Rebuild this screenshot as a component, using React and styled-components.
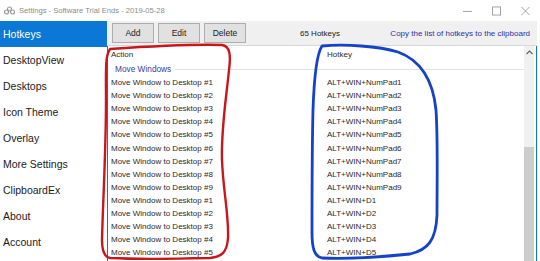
import React from "react";
import styled, { createGlobalStyle } from "styled-components";

const GlobalStyle = createGlobalStyle`
  html, body {
    margin: 0;
    padding: 0;
    background: #ffffff;
  }
  body {
    font-family: "Liberation Sans", Arial, sans-serif;
  }
`;

const menuItems = [
  "Hotkeys",
  "DesktopView",
  "Desktops",
  "Icon Theme",
  "Overlay",
  "More Settings",
  "ClipboardEx",
  "About",
  "Account",
];

const rows = [
  ...[1, 2, 3, 4, 5, 6, 7, 8, 9].map((n) => [
    `Move Window to Desktop #${n}`,
    `ALT+WIN+NumPad${n}`,
  ]),
  ...[1, 2, 3, 4, 5].map((n) => [`Move Window to Desktop #${n}`, `ALT+WIN+D${n}`]),
];

const App = () => {
  return (
    <>
      <GlobalStyle />
      <Window>
        <TitleBar>
          <TitleIcon width="11" height="10" viewBox="0 0 11 10">
            <circle cx="2.5" cy="6" r="2" fill="none" stroke="#9a9a9a" strokeWidth="1.2" />
            <circle cx="5.5" cy="3" r="2" fill="none" stroke="#9a9a9a" strokeWidth="1.2" />
            <circle cx="8.5" cy="6" r="2" fill="none" stroke="#9a9a9a" strokeWidth="1.2" />
          </TitleIcon>
          <TitleText>Settings - Software Trial Ends - 2019-05-28</TitleText>
          <WindowControls>
            <ControlBox>
              <svg width="10" height="10" viewBox="0 0 10 10">
                <line x1="0" y1="5.5" x2="10" y2="5.5" stroke="#9a9a9a" strokeWidth="1" />
              </svg>
            </ControlBox>
            <ControlBox>
              <svg width="10" height="10" viewBox="0 0 10 10">
                <rect x="0.5" y="0.5" width="9" height="9" fill="none" stroke="#9a9a9a" strokeWidth="1" />
              </svg>
            </ControlBox>
            <ControlBox>
              <svg width="10" height="10" viewBox="0 0 10 10">
                <line x1="0.5" y1="0.5" x2="9.5" y2="9.5" stroke="#9a9a9a" strokeWidth="1" />
                <line x1="9.5" y1="0.5" x2="0.5" y2="9.5" stroke="#9a9a9a" strokeWidth="1" />
              </svg>
            </ControlBox>
          </WindowControls>
        </TitleBar>

        <Body>
          <Sidebar>
            {menuItems.map((item, i) => (
              <MenuItem key={item} active={i === 0}>
                {item}
              </MenuItem>
            ))}
          </Sidebar>

          <Main>
            <Toolbar>
              <ToolButton>Add</ToolButton>
              <ToolButton>Edit</ToolButton>
              <ToolButton>Delete</ToolButton>
              <Count>65 Hotkeys</Count>
              <CopyLink>Copy the list of hotkeys to the clipboard</CopyLink>
            </Toolbar>

            <ListPanel>
              <ListContent>
                <HeaderRow>
                  <span>Action</span>
                  <span>Hotkey</span>
                </HeaderRow>
                <GroupRow>
                  <GroupLabel>Move Windows</GroupLabel>
                  <GroupLine />
                </GroupRow>
                {rows.map(([action, key], i) => (
                  <Row key={i}>
                    <span>{action}</span>
                    <span>{key}</span>
                  </Row>
                ))}
              </ListContent>
              <Scrollbar>
                <ScrollArrow>
                  <svg width="7" height="5" viewBox="0 0 7 5">
                    <polyline points="0.5,4 3.5,1 6.5,4" fill="none" stroke="#606060" strokeWidth="1.1" />
                  </svg>
                </ScrollArrow>
                <ScrollTrack>
                  <ScrollThumb />
                </ScrollTrack>
              </Scrollbar>
            </ListPanel>
          </Main>
        </Body>

        <Annotations width="540" height="261" viewBox="0 0 540 261">
          <path
            d="M110 49 C140 47 190 44 222 45 C230 46 231 55 229 70 C226 100 221 130 222 160 C223 190 229 215 228 238 C227 252 222 257 210 258 C170 259 130 259 110 258 C104 257 102 250 102 240 C103 200 106 150 106 100 C106 70 105 56 110 49 Z"
            fill="none"
            stroke="#c9161d"
            strokeWidth="2.4"
            strokeLinejoin="round"
          />
          <path
            d="M322 46 C345 44 378 46 398 52 C420 60 433 80 436 110 C438 140 437 180 437 215 C436 240 428 250 410 254 C380 257 345 259 322 258 C314 256 312 248 312 232 C312 190 312 150 313 110 C314 80 316 55 322 46 Z"
            fill="none"
            stroke="#1442c8"
            strokeWidth="2.8"
            strokeLinejoin="round"
          />
        </Annotations>
      </Window>
    </>
  );
};

const Window = styled.div`
  position: relative;
  width: 540px;
  height: 261px;
  overflow: hidden;
  display: flex;
  flex-direction: column;
  background: #ffffff;
`;

const TitleBar = styled.div`
  height: 21px;
  flex: 0 0 21px;
  display: flex;
  align-items: center;
  padding-left: 4px;
`;

const TitleIcon = styled.svg`
  margin-right: 4px;
`;

const TitleText = styled.span`
  font-size: 7.6px;
  color: #8c8c8c;
  flex: 1;
`;

const WindowControls = styled.div`
  display: flex;
  align-items: center;
  gap: 20px;
  padding-right: 10px;
`;

const ControlBox = styled.div`
  width: 9px;
  height: 10px;
  display: flex;
`;

const Body = styled.div`
  flex: 1;
  display: flex;
  min-height: 0;
  padding-right: 3px;
`;

const Sidebar = styled.nav`
  width: 107px;
  flex: 0 0 107px;
  display: flex;
  flex-direction: column;
`;

const MenuItem = styled.div`
  height: 26px;
  flex: 0 0 26px;
  display: flex;
  align-items: center;
  padding-left: 3px;
  font-size: 10.5px;
  color: ${(props) => (props.active ? "#ffffff" : "#1a1a1a")};
  background: ${(props) => (props.active ? "#0a78d4" : "transparent")};
`;

const Main = styled.div`
  flex: 1;
  display: flex;
  flex-direction: column;
  min-width: 0;
`;

const Toolbar = styled.div`
  height: 25px;
  flex: 0 0 25px;
  display: flex;
  align-items: center;
  background: #f0f0f0;
  border-bottom: 1px solid #d8d8d8;
  padding-left: 5px;
  box-sizing: border-box;
`;

const ToolButton = styled.div`
  width: 42px;
  height: 20px;
  box-sizing: border-box;
  margin-right: 4px;
  display: flex;
  align-items: center;
  justify-content: center;
  background: #e1e1e1;
  border: 1px solid #adadad;
  font-size: 8.5px;
  color: #1a1a1a;
`;

const Count = styled.span`
  margin-left: 50px;
  font-size: 8px;
  color: #1a1a1a;
`;

const CopyLink = styled.span`
  margin-left: auto;
  margin-right: 7px;
  font-size: 8px;
  color: #2f2fa6;
`;

const ListPanel = styled.div`
  flex: 1;
  display: flex;
  min-height: 0;
  border-left: 1px solid #0a78d4;
  border-right: 1px solid #0a78d4;
  padding-right: 2px;
`;

const ListContent = styled.div`
  flex: 1;
  display: flex;
  flex-direction: column;
  min-width: 0;
  font-size: 8px;
  color: #2a2a2a;
`;

const HeaderRow = styled.div`
  height: 16px;
  flex: 0 0 16px;
  display: grid;
  grid-template-columns: 216px 1fr;
  align-items: center;
  padding-left: 3px;
`;

const GroupRow = styled.div`
  height: 14px;
  flex: 0 0 14px;
  display: flex;
  align-items: center;
  padding-left: 7px;
`;

const GroupLabel = styled.span`
  font-size: 8.3px;
  color: #34439a;
  margin-right: 4px;
`;

const GroupLine = styled.div`
  flex: 1;
  height: 1px;
  background: #e2e2e2;
`;

const Row = styled.div`
  height: 13.1px;
  flex: 0 0 13.1px;
  display: grid;
  grid-template-columns: 216px 1fr;
  align-items: center;
  padding-left: 3px;
`;

const Scrollbar = styled.div`
  width: 10px;
  flex: 0 0 10px;
  display: flex;
  flex-direction: column;
  background: #f0f0f0;
`;

const ScrollArrow = styled.div`
  height: 12px;
  display: flex;
  align-items: center;
  justify-content: center;
`;

const ScrollTrack = styled.div`
  flex: 1;
  display: flex;
  flex-direction: column;
  padding-top: 89px;
`;

const ScrollThumb = styled.div`
  flex: 1;
  background: #cdcdcd;
`;

const Annotations = styled.svg`
  position: absolute;
  left: 0;
  top: 0;
  pointer-events: none;
`;

export default App;
